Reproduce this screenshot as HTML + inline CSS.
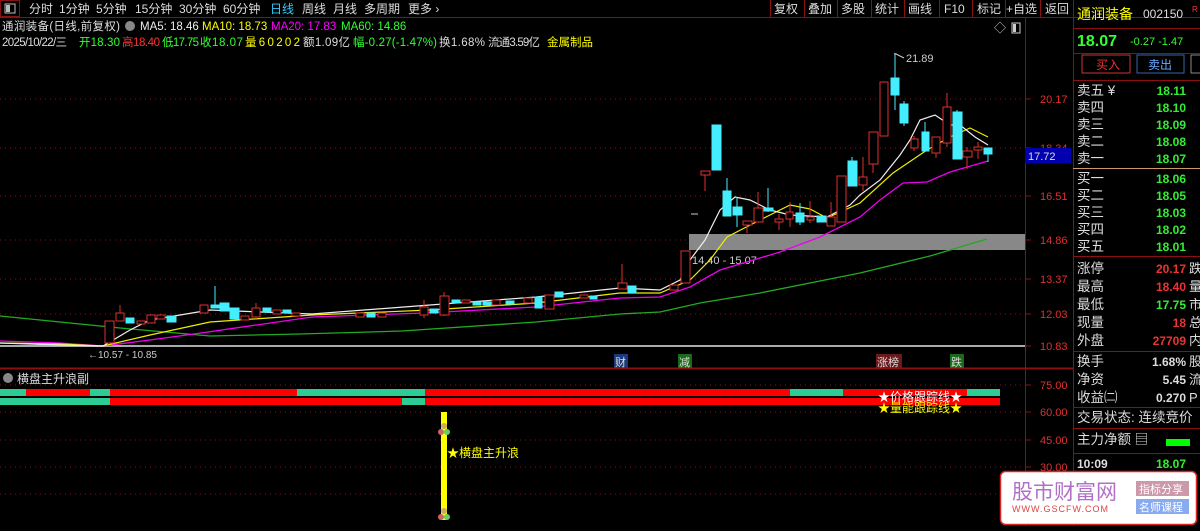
<!DOCTYPE html>
<html><head><meta charset="utf-8"><style>
body{margin:0;background:#000;width:1200px;height:526px;overflow:hidden;font-family:"Liberation Sans","Noto Sans CJK SC",sans-serif;}
svg text{font-family:"Liberation Sans","Noto Sans CJK SC",sans-serif;}
</style></head><body>
<svg width="1200" height="526" viewBox="0 0 1200 526" xmlns="http://www.w3.org/2000/svg">
<rect width="1200" height="526" fill="#000"/>
<!-- top toolbar -->
<line x1="0" y1="17.5" x2="1200" y2="17.5" stroke="#8b1010"/>
<rect x="0.5" y="0.5" width="19" height="16" fill="none" stroke="#8b1010"/>
<rect x="5" y="4" width="10" height="9" fill="none" stroke="#bbb"/><rect x="6" y="5" width="4" height="7" fill="#bbb"/>
<g font-size="12" fill="#ddd">
<text x="29" y="13">分时</text><text x="59" y="13">1分钟</text><text x="96" y="13">5分钟</text><text x="135" y="13">15分钟</text><text x="179" y="13">30分钟</text><text x="223" y="13">60分钟</text>
<text x="270" y="13" fill="#3cf">日线</text><text x="302" y="13">周线</text><text x="333" y="13">月线</text><text x="364" y="13">多周期</text><text x="408" y="13">更多 ›</text>
</g>
<g font-size="12" fill="#ddd">
<text x="774" y="13">复权</text><text x="808" y="13">叠加</text><text x="841" y="13">多股</text><text x="875" y="13">统计</text><text x="908" y="13">画线</text><text x="944" y="13">F10</text><text x="977" y="13">标记</text><text x="1006" y="13">+自选</text><text x="1045" y="13">返回</text>
</g>
<g stroke="#8b1010"><line x1="770.5" y1="0" x2="770.5" y2="17"/><line x1="804.5" y1="0" x2="804.5" y2="17"/><line x1="837.5" y1="0" x2="837.5" y2="17"/><line x1="871.5" y1="0" x2="871.5" y2="17"/><line x1="904.5" y1="0" x2="904.5" y2="17"/><line x1="939.5" y1="0" x2="939.5" y2="17"/><line x1="972.5" y1="0" x2="972.5" y2="17"/><line x1="1005.5" y1="0" x2="1005.5" y2="17"/><line x1="1040.5" y1="0" x2="1040.5" y2="17"/></g>
<!-- info lines -->
<g font-size="11.5">
<text x="2" y="30" fill="#ddd" textLength="118">通润装备(日线,前复权)</text>
<circle cx="130" cy="26" r="5" fill="#888"/>
<text x="140" y="30" fill="#eee">MA5: 18.46</text><text x="202" y="30" fill="#ff0">MA10: 18.73</text><text x="271" y="30" fill="#f0f">MA20: 17.83</text><text x="341" y="30" fill="#3f3">MA60: 14.86</text>
</g>
<g font-size="11.5">
<text x="2" y="46" fill="#ddd" textLength="65">2025/10/22/三</text><text x="79" y="46" fill="#3f3" textLength="41">开18.30</text><text x="122" y="46" fill="#f33" textLength="38">高18.40</text><text x="162" y="46" fill="#3f3" textLength="37">低17.75</text><text x="200" y="46" fill="#3f3" textLength="43">收18.07</text><text x="245" y="46" fill="#ff0" textLength="55">量60202</text><text x="303" y="46" fill="#ddd" textLength="47">额1.09亿</text><text x="353" y="46" fill="#3f3" textLength="84">幅-0.27(-1.47%)</text><text x="439" y="46" fill="#ddd" textLength="46">换1.68%</text><text x="488" y="46" fill="#ddd" textLength="52">流通3.59亿</text><text x="547" y="46" fill="#ff0" textLength="46">金属制品</text>
</g>
<text x="994" y="32" font-size="12" fill="#ccc">◇</text><rect x="1012" y="23" width="8" height="10" fill="none" stroke="#ccc"/><rect x="1013" y="24" width="3" height="8" fill="#ccc"/>
<!-- frame lines -->
<line x1="1025.5" y1="18" x2="1025.5" y2="526" stroke="#8b1010"/>
<line x1="1073.5" y1="0" x2="1073.5" y2="526" stroke="#8b1010"/>
<line x1="0" y1="368.5" x2="1073" y2="368.5" stroke="#8b1010" stroke-width="2"/>
<!-- grid -->
<g stroke="#8b1010" stroke-dasharray="1,4">
<line x1="0" y1="99" x2="1025" y2="99"/><line x1="0" y1="148" x2="1025" y2="148"/><line x1="0" y1="196" x2="1025" y2="196"/><line x1="0" y1="240" x2="1025" y2="240"/><line x1="0" y1="279" x2="1025" y2="279"/><line x1="0" y1="314" x2="1025" y2="314"/>
<line x1="0" y1="385" x2="1025" y2="385"/><line x1="0" y1="412" x2="1025" y2="412"/><line x1="0" y1="440" x2="1025" y2="440"/><line x1="0" y1="467" x2="1025" y2="467"/><line x1="0" y1="494" x2="1025" y2="494"/>
</g>
<g stroke="#8b1010"><line x1="1025" y1="99" x2="1031" y2="99"/><line x1="1025" y1="148" x2="1031" y2="148"/><line x1="1025" y1="196" x2="1031" y2="196"/><line x1="1025" y1="240" x2="1031" y2="240"/><line x1="1025" y1="279" x2="1031" y2="279"/><line x1="1025" y1="314" x2="1031" y2="314"/><line x1="1025" y1="346" x2="1031" y2="346"/><line x1="1025" y1="385" x2="1031" y2="385"/><line x1="1025" y1="412" x2="1031" y2="412"/><line x1="1025" y1="440" x2="1031" y2="440"/><line x1="1025" y1="467" x2="1031" y2="467"/></g>
<g font-size="11" fill="#e03030">
<text x="1040" y="103">20.17</text><text x="1040" y="152">18.34</text><text x="1040" y="200">16.51</text><text x="1040" y="244">14.86</text><text x="1040" y="283">13.37</text><text x="1040" y="318">12.03</text><text x="1040" y="350">10.83</text>
<text x="1040" y="389">75.00</text><text x="1040" y="416">60.00</text><text x="1040" y="444">45.00</text><text x="1040" y="471">30.00</text>
</g>
<rect x="1025" y="148" width="46" height="15" fill="#0000b0"/><text x="1028" y="160" font-size="11" fill="#ddd">17.72</text>
<!-- gray band & line -->
<rect x="689" y="234" width="336" height="16" fill="#888"/>
<line x1="0" y1="346" x2="1025" y2="346" stroke="#aaa" stroke-width="2"/>
<text x="692" y="264" font-size="11" fill="#ccc">14.40 - 15.07</text>
<text x="906" y="62" font-size="11" fill="#ccc">21.89</text><path d="M896 54 L904 58" stroke="#ccc"/>
<text x="88" y="358" font-size="10" fill="#ccc">←10.57 - 10.85</text>
<!-- MA lines -->
<polyline fill="none" stroke="#2a2" stroke-width="1.3" points="0,316 60,322 120,328 210,336 300,334 402,331 536,322 620,314 660,312 700,303 760,293 860,273 930,256 987,239"/>
<polyline fill="none" stroke="#e0e" stroke-width="1.3" points="0,341 60,343 103,346 150,340 201,333 312,317 424,313 536,307 620,298 660,297 690,287 720,270 780,252 820,237 860,217 880,200 903,183 927,182 950,172 988,161"/>
<polyline fill="none" stroke="#ee0" stroke-width="1.2" points="0,343 60,344 103,346 150,335 210,322 312,315 430,310 536,303 620,293 660,293 690,280 710,260 727,237 760,220 790,205 810,209 827,218 860,203 893,173 927,150 950,137 970,128 988,137"/>
<polyline fill="none" stroke="#eee" stroke-width="1.2" points="0,343 60,345 103,346 130,330 150,320 210,310 312,314 430,305 536,297 620,288 660,290 680,280 690,260 705,240 720,210 735,197 750,200 770,210 790,215 827,217 850,205 860,195 880,180 900,155 910,140 920,120 935,115 950,125 960,125 975,137 988,145"/>
<!-- candles -->
<g stroke="#e03030" fill="#000" stroke-width="1">
<rect x="105" y="321" width="9" height="22"/><line x1="120" y1="305" x2="120" y2="313"/><rect x="116" y="313" width="8" height="8"/>
<rect x="137" y="321" width="8" height="3"/><rect x="147" y="315" width="8" height="8"/><rect x="157" y="315" width="8" height="4"/>
<rect x="200" y="305" width="8" height="8"/><rect x="241" y="316" width="8" height="4"/><line x1="256" y1="303" x2="256" y2="320"/><rect x="252" y="308" width="8" height="9"/><rect x="273" y="310" width="8" height="4"/><rect x="292" y="313" width="8" height="3"/>
<rect x="356" y="313" width="8" height="4"/><rect x="378" y="313" width="8" height="4"/>
<line x1="424" y1="300" x2="424" y2="318"/><rect x="420" y="307" width="8" height="8"/><line x1="444" y1="292" x2="444" y2="316"/><rect x="440" y="296" width="9" height="19"/><rect x="462" y="300" width="8" height="3"/><rect x="492" y="300" width="8" height="5"/><rect x="524" y="298" width="8" height="5"/><rect x="545" y="295" width="9" height="14"/>
<rect x="580" y="295" width="8" height="3"/><line x1="622" y1="264" x2="622" y2="289"/><rect x="618" y="283" width="9" height="6"/><rect x="670" y="285" width="8" height="5"/>
<rect x="681" y="251" width="9" height="32"/>
<line x1="705" y1="171" x2="705" y2="191"/><rect x="701" y="171" width="9" height="4"/>
<line x1="747" y1="221" x2="747" y2="233"/><rect x="743" y="221" width="9" height="4"/>
<line x1="758" y1="192" x2="758" y2="222"/><rect x="754" y="208" width="9" height="14"/>
<line x1="779" y1="214" x2="779" y2="230"/><rect x="775" y="219" width="8" height="3"/>
<line x1="790" y1="202" x2="790" y2="227"/><rect x="786" y="212" width="7" height="7"/>
<line x1="810" y1="201" x2="810" y2="223"/><rect x="807" y="217" width="7" height="3"/>
<line x1="831" y1="202" x2="831" y2="226"/><rect x="827" y="217" width="8" height="9"/>
<rect x="837" y="176" width="9" height="46"/>
<line x1="863" y1="157" x2="863" y2="191"/><rect x="859" y="177" width="8" height="8"/>
<line x1="873" y1="132" x2="873" y2="173"/><rect x="869" y="132" width="9" height="32"/>
<rect x="880" y="82" width="8" height="54"/>
<line x1="914" y1="136" x2="914" y2="151"/><rect x="911" y="139" width="7" height="9"/>
<line x1="936" y1="137" x2="936" y2="158"/><rect x="932" y="137" width="8" height="16"/>
<line x1="947" y1="93" x2="947" y2="147"/><rect x="943" y="107" width="8" height="36"/>
<line x1="967" y1="147" x2="967" y2="169"/><rect x="963" y="151" width="9" height="6"/>
<line x1="978" y1="142" x2="978" y2="159"/><rect x="974" y="147" width="8" height="3"/>
</g>
<g fill="#4ef" stroke="#4ef">
<rect x="126" y="318" width="8" height="5"/><rect x="167" y="316" width="9" height="6"/><line x1="215" y1="286" x2="215" y2="305"/><rect x="211" y="305" width="8" height="3"/><rect x="220" y="303" width="9" height="8"/><rect x="230" y="308" width="9" height="11"/>
<rect x="263" y="308" width="8" height="4"/><rect x="283" y="310" width="8" height="3"/><rect x="367" y="313" width="8" height="4"/>
<rect x="430" y="309" width="8" height="4"/><rect x="452" y="300" width="8" height="3"/><rect x="473" y="302" width="8" height="3"/><rect x="483" y="302" width="8" height="3"/><rect x="506" y="301" width="8" height="3"/><rect x="535" y="297" width="7" height="11"/><rect x="555" y="292" width="8" height="5"/><rect x="590" y="296" width="7" height="3"/><rect x="628" y="286" width="8" height="7"/>
<rect x="712" y="125" width="9" height="45"/>
<line x1="727" y1="178" x2="727" y2="191"/><rect x="723" y="191" width="8" height="25"/>
<line x1="737" y1="197" x2="737" y2="227"/><rect x="733" y="207" width="9" height="8"/>
<line x1="768" y1="188" x2="768" y2="212"/><rect x="764" y="208" width="9" height="3"/>
<line x1="800" y1="203" x2="800" y2="225"/><rect x="796" y="213" width="8" height="9"/>
<rect x="817" y="216" width="9" height="6"/>
<line x1="852" y1="157" x2="852" y2="161"/><rect x="848" y="161" width="9" height="25"/>
<line x1="895" y1="53" x2="895" y2="110"/><rect x="891" y="78" width="8" height="17"/>
<line x1="904" y1="101" x2="904" y2="126"/><rect x="900" y="104" width="8" height="19"/>
<line x1="925" y1="122" x2="925" y2="151"/><rect x="922" y="132" width="7" height="19"/>
<line x1="957" y1="110" x2="957" y2="112"/><rect x="953" y="112" width="9" height="47"/>
<line x1="988" y1="154" x2="988" y2="162"/><rect x="984" y="148" width="8" height="6"/>
</g>
<path d="M894 54 h3" stroke="#ccc"/>
<path d="M691 214 h7" stroke="#ccc"/>
<!-- event markers -->
<g font-size="11">
<rect x="614" y="354" width="14" height="14" fill="#1a3a7a"/><text x="615" y="366" fill="#ddd">财</text>
<rect x="678" y="354" width="14" height="14" fill="#1a6a1a"/><text x="679" y="366" fill="#ddd">减</text>
<rect x="876" y="354" width="26" height="14" fill="#6a1a1a"/><text x="877" y="366" fill="#ddd">涨榜</text>
<rect x="950" y="354" width="14" height="14" fill="#1a6a1a"/><text x="951" y="366" fill="#ddd">跌</text>
</g>
<!-- sub chart -->
<circle cx="8" cy="378" r="5" fill="#888"/>
<text x="17" y="383" font-size="12" fill="#ddd">横盘主升浪副</text>
<g>
<rect x="0" y="389" width="1000" height="7" fill="#f00"/>
<rect x="0" y="389" width="26" height="7" fill="#2ecc95"/><rect x="90" y="389" width="20" height="7" fill="#2ecc95"/><rect x="297" y="389" width="128" height="7" fill="#2ecc95"/><rect x="790" y="389" width="53" height="7" fill="#2ecc95"/><rect x="967" y="389" width="33" height="7" fill="#2ecc95"/>
<rect x="0" y="398" width="1000" height="7" fill="#f00"/>
<rect x="0" y="398" width="110" height="7" fill="#2ecc95"/><rect x="402" y="398" width="23" height="7" fill="#2ecc95"/>
</g>
<text x="878" y="401" font-size="12" fill="#fff">★价格跟踪线★</text>
<text x="878" y="412" font-size="12" fill="#ff0">★量能跟踪线★</text>
<rect x="441" y="412" width="6" height="108" fill="#ff0"/>
<circle cx="441" cy="432" r="3" fill="#c66"/><circle cx="447" cy="432" r="3" fill="#6c6"/><circle cx="444" cy="426" r="3" fill="#ca6"/>
<circle cx="441" cy="517" r="3" fill="#c66"/><circle cx="447" cy="517" r="3" fill="#6c6"/><circle cx="444" cy="511" r="3" fill="#ca6"/>
<text x="447" y="457" font-size="12" fill="#ff0">★横盘主升浪</text>
<!-- right panel -->
<text x="1077" y="19" font-size="14" fill="#ff0">通润装备</text><text x="1143" y="18" font-size="12" fill="#ddd">002150</text><text x="1192" y="12" font-size="8" fill="#f33">R</text>
<line x1="1073" y1="28.5" x2="1200" y2="28.5" stroke="#8b1010"/>
<text x="1077" y="46" font-size="16" font-weight="bold" fill="#3f3">18.07</text><text x="1130" y="45" font-size="11" fill="#3f3">-0.27  -1.47</text>
<line x1="1073" y1="53.5" x2="1200" y2="53.5" stroke="#8b1010"/>
<rect x="1082" y="55" width="48" height="18" fill="none" stroke="#c33"/><text x="1096" y="69" font-size="12" fill="#e33">买入</text>
<rect x="1137" y="55" width="47" height="18" fill="none" stroke="#36a"/><text x="1148" y="69" font-size="12" fill="#6af">卖出</text>
<rect x="1191" y="55" width="12" height="18" fill="none" stroke="#888"/>
<line x1="1073" y1="80.5" x2="1200" y2="80.5" stroke="#8b1010"/>
<g font-size="13.5" fill="#ddd">
<text x="1077" y="95">卖五 ¥</text><text x="1077" y="112">卖四</text><text x="1077" y="129">卖三</text><text x="1077" y="146">卖二</text><text x="1077" y="163">卖一</text>
<text x="1077" y="183">买一</text><text x="1077" y="200">买二</text><text x="1077" y="217">买三</text><text x="1077" y="234">买四</text><text x="1077" y="251">买五</text>
<text x="1077" y="273">涨停</text><text x="1077" y="291">最高</text><text x="1077" y="309">最低</text><text x="1077" y="327">现量</text><text x="1077" y="345">外盘</text>
<text x="1077" y="366">换手</text><text x="1077" y="384">净资</text><text x="1077" y="402">收益㈡</text>
<text x="1077" y="422">交易状态: 连续竞价</text><text x="1077" y="444">主力净额 ▤</text>
</g>
<g font-size="12" font-weight="bold" fill="#3e3" text-anchor="end">
<text x="1186" y="95">18.11</text><text x="1186" y="112">18.10</text><text x="1186" y="129">18.09</text><text x="1186" y="146">18.08</text><text x="1186" y="163">18.07</text>
<text x="1186" y="183">18.06</text><text x="1186" y="200">18.05</text><text x="1186" y="217">18.03</text><text x="1186" y="234">18.02</text><text x="1186" y="251">18.01</text>
<text x="1186" y="273" fill="#e33">20.17</text><text x="1186" y="291" fill="#e33">18.40</text><text x="1186" y="309">17.75</text><text x="1186" y="327" fill="#e33">18</text><text x="1186" y="345" fill="#e33">27709</text>
<text x="1186" y="366" fill="#ddd">1.68%</text><text x="1186" y="384" fill="#ddd">5.45</text><text x="1186" y="402" fill="#ddd">0.270</text>
</g>
<g font-size="13" fill="#ddd"><text x="1189" y="273">跌</text><text x="1189" y="291">量</text><text x="1189" y="309">市</text><text x="1189" y="327">总</text><text x="1189" y="345">内</text><text x="1189" y="366">股</text><text x="1189" y="384">流</text><text x="1189" y="402">P</text></g>
<line x1="1073" y1="168.5" x2="1200" y2="168.5" stroke="#c96"/>
<g stroke="#8b1010"><line x1="1073" y1="256.5" x2="1200" y2="256.5"/><line x1="1073" y1="351.5" x2="1200" y2="351.5"/><line x1="1073" y1="407.5" x2="1200" y2="407.5"/><line x1="1073" y1="428.5" x2="1200" y2="428.5"/><line x1="1073" y1="453.5" x2="1200" y2="453.5"/></g>
<rect x="1166" y="439" width="24" height="7" fill="#0f0"/>
<text x="1077" y="468" font-size="12" font-weight="bold" fill="#ddd">10:09</text><text x="1186" y="468" font-size="12" font-weight="bold" fill="#3e3" text-anchor="end">18.07</text>
<!-- watermark -->
<rect x="1000.5" y="471.5" width="196" height="53" rx="5" fill="#fff" stroke="#d22" stroke-width="1.5"/>
<text x="1012" y="499" font-size="21" fill="#b070c8" font-family="Liberation Serif,Noto Serif CJK SC,serif">股市财富网</text>
<text x="1012" y="512" font-size="9" fill="#d44" font-family="Liberation Serif,serif" letter-spacing="1">WWW.GSCFW.COM</text>
<rect x="1136" y="481" width="53" height="15" fill="#c9a"/><text x="1139" y="493" font-size="11" fill="#fff">指标分享</text>
<rect x="1136" y="499" width="53" height="15" fill="#8ae"/><text x="1139" y="511" font-size="11" fill="#fff">名师课程</text>
</svg>
</body></html>
